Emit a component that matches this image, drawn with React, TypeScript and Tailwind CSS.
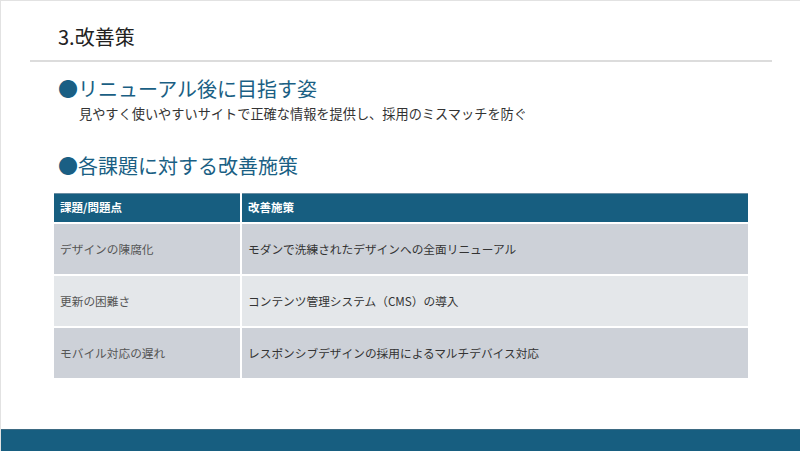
import React from "react";

const rows = [
  ["デザインの陳腐化", "モダンで洗練されたデザインへの全面リニューアル", "bg-[#cdd1d8]"],
  ["更新の困難さ", "コンテンツ管理システム（CMS）の導入", "bg-[#e4e7ea]"],
  ["モバイル対応の遅れ", "レスポンシブデザインの採用によるマルチデバイス対応", "bg-[#cdd1d8]"],
];

export default function App() {
  return (
    <div
      className="w-[800px] h-[451px] flex flex-col bg-white border-t border-l border-[#e2e2e2] overflow-hidden"
      style={{ fontFamily: '"Noto Sans CJK JP", "Noto Sans", sans-serif' }}
    >
      <div className="pt-[22px] pl-[57px] text-[20px] leading-[28px] text-[#222]">3.改善策</div>
      <div className="mt-[9px] ml-[29px] w-[742px] h-[2px] bg-[#dcdcdc]" />
      <div className="mt-[13px] pl-[57px] text-[20px] leading-[28px] text-[#1a5f84]">●リニューアル後に目指す姿</div>
      <div className="mt-[2px] pl-[78px] text-[13.2px] leading-[18px] text-[#333]">
        見やすく使いやすいサイトで正確な情報を提供し、採用のミスマッチを防ぐ
      </div>
      <div className="mt-[29px] pl-[57px] text-[20px] leading-[28px] text-[#1a5f84]">●各課題に対する改善施策</div>
      <div className="mt-[13px] ml-[53px] w-[694px] grid grid-cols-[186px_506px] gap-[2px]">
        <div className="h-[29px] bg-[#175e80] border-t border-[#6b8ea3] flex items-center pl-[6px] text-white text-[11.5px] font-bold">
          課題/問題点
        </div>
        <div className="h-[29px] bg-[#175e80] border-t border-[#6b8ea3] flex items-center pl-[6px] text-white text-[11.5px] font-bold">
          改善施策
        </div>
        {rows.map(([a, b, bg], i) => (
          <React.Fragment key={i}>
            <div className={`h-[50px] ${bg} flex items-center pl-[6px] text-[11.7px] text-[#555]`}>{a}</div>
            <div className={`h-[50px] ${bg} flex items-center pl-[6px] text-[11.7px] text-[#333]`}>{b}</div>
          </React.Fragment>
        ))}
      </div>
      <div className="flex-1" />
      <div className="h-[22px] bg-[#175e80] border-t border-[#3d6a82]" />
    </div>
  );
}
